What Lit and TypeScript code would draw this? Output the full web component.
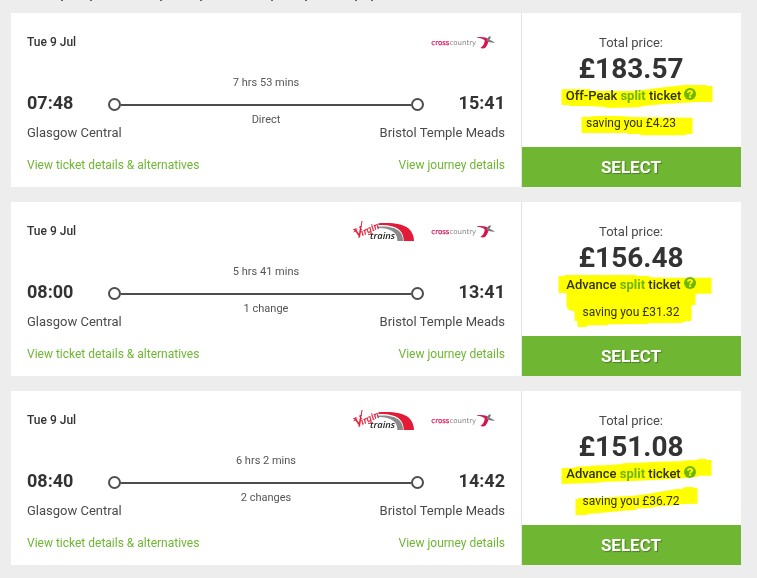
import { LitElement, html, css, svg } from "lit";
import { customElement, property } from "lit/decorators.js";

interface Journey {
  date: string;
  depart: string;
  arrive: string;
  from: string;
  to: string;
  duration: string;
  changes: string;
  virgin: boolean;
  price: string;
  ticket: string;
  saving: string;
  markTop: number;
  marks: string[];
}

const JOURNEYS: Journey[] = [
  {
    date: "Tue 9 Jul", depart: "07:48", arrive: "15:41",
    from: "Glasgow Central", to: "Bristol Temple Meads",
    duration: "7 hrs 53 mins", changes: "Direct", virgin: false,
    price: "£183.57", ticket: "Off-Peak", saving: "saving you £4.23",
    markTop: -21,
    marks: [
      "123,208 210,208 210,212 248,213 340,213 385,208 430,202 492,195 558,195 558,198 576,198 576,246 530,246 480,249 430,252 370,258 354,262 258,264 257,261 200,258 145,258 144,255 123,255",
      "183,290 216,290 216,288 300,288 330,291 372,292 516,293 516,342 498,342 498,346 360,346 360,342 321,342 321,339 183,339",
    ],
  },
  {
    date: "Tue 9 Jul", depart: "08:00", arrive: "13:41",
    from: "Glasgow Central", to: "Bristol Temple Meads",
    duration: "5 hrs 41 mins", changes: "1 change", virgin: true,
    price: "£156.48", ticket: "Advance", saving: "saving you £31.32",
    markTop: -24,
    marks: [
      "114,198 132,198 132,195 348,195 348,198 387,198 387,202 440,203 573,203 573,251 525,251 525,285 513,285 513,333 495,333 495,336 486,336 486,339 381,340 381,342 264,343 264,346 210,346 198,348 198,351 171,351 171,333 162,333 162,303 150,303 150,299 141,299 141,291 138,291 138,249 114,249",
    ],
  },
  {
    date: "Tue 9 Jul", depart: "08:40", arrive: "14:42",
    from: "Glasgow Central", to: "Bristol Temple Meads",
    duration: "6 hrs 2 mins", changes: "2 changes", virgin: true,
    price: "£151.08", ticket: "Advance", saving: "saving you £36.72",
    markTop: -27,
    marks: [
      "123,204 165,203 165,200 210,199 210,197 267,195 306,192 306,190 354,188 414,185 480,184 501,181 531,180 531,177 558,177 558,180 573,180 573,227 534,227 534,230 513,231 501,234 460,236 399,240 340,243 255,245 230,248 186,250 123,252",
      "165,297 174,297 174,294 255,293 290,290 339,287 380,282 414,276 450,270 468,267 486,267 486,263 498,261 519,261 519,264 531,264 531,311 486,312 470,315 396,321 396,323 345,326 345,330 300,333 240,339 200,342 200,345 165,345",
    ],
  },
];

const virginLogo = html`
  <svg class="virgin" viewBox="39 27 186 69" role="img" aria-label="Virgin Trains">
    <path fill="#e31b36" d="M115 37C150 34 188 37 205 52C217 63 222 76 222 90H191C191 70 183 56 163 48C150 43 133 42 115 42Z" />
    <path fill="#8a8a8c" d="M113 47C140 44 165 49 177 60C187 69 189 79 189 90H172C172 77 168 67 156 60C145 53 130 50 113 51Z" />
    <path fill="none" stroke="#e31b36" stroke-width="3" stroke-linecap="round" d="M42 62L51 56M57 80L66 31" />
    <g fill="#e31b36" stroke="#e31b36" font-family="Liberation Serif, serif" font-style="italic" transform="translate(49 82) rotate(-24)">
      <text font-size="42" stroke-width="1">V</text>
      <text x="19" y="0" font-size="30" stroke-width="1">irgin</text>
    </g>
    <text x="90" y="85" fill="#222" font-family="Open Sans, sans-serif" font-size="28" font-weight="600" font-style="italic">trains</text>
  </svg>`;

const crossCountryLogo = html`
  <svg class="cross" viewBox="273 42 192 42" role="img" aria-label="CrossCountry">
    <text x="274" y="71" font-family="DejaVu Sans, sans-serif" font-size="21"><tspan fill="#d6105a" stroke="#d6105a" stroke-width="0.6">cross</tspan><tspan fill="#85858a">country</tspan></text>
    <path fill="#d6174f" d="M411 49C424 46 438 48 448 55C445 64 443 74 436 80C432 83 426 83 421 81C431 75 434 65 434 58C428 53 421 51 411 50Z" />
    <path fill="#77787b" d="M440 56L446 47L452 46L452 51L448 56C454 58 460 61 465 65C456 66 447 63 440 60Z" />
  </svg>`;

@customElement("journey-card")
class JourneyCard extends LitElement {
  @property({ attribute: false }) journey!: Journey;

  static styles = css`
    :host { display: flex; background: #fff; color: #333; font-size: 12px; line-height: 16px; }
    .trip { flex: 1; min-width: 0; padding: 17px 16px 14px 16px; box-sizing: border-box; }
    .head { display: flex; align-items: center; height: 24px; padding-right: 10px; }
    .date { flex: 1; font-weight: 500; }
    .logos { display: flex; align-items: center; gap: 16px; }
    .virgin { width: 62px; height: 23px; display: block; overflow: visible; }
    .cross { width: 64px; height: 14px; display: block; overflow: visible; }
    .route { display: flex; margin-top: 21px; }
    .stop { flex: none; width: 81px; display: flex; flex-direction: column; gap: 9px; padding-top: 16px; white-space: nowrap; align-items: flex-start; }
    .stop.end { align-items: flex-end; }
    .time { font-size: 18px; line-height: 24px; font-weight: 700; }
    .place { font-size: 13px; line-height: 18px; color: #4a4a4a; }
    .track { flex: 1; text-align: center; font-size: 11px; color: #555; }
    .line { display: flex; align-items: center; margin: 7px 0 1px; }
    .dot { width: 13px; height: 13px; box-sizing: border-box; border: 2px solid #4d4d4d; border-radius: 50%; }
    .rail { flex: 1; height: 2px; background: #4d4d4d; }
    .links { display: flex; justify-content: space-between; margin-top: 15px; }
    a { color: #6fb633; text-decoration: none; }
    .fare { width: 30%; box-sizing: content-box; flex: none; border-left: 1px solid #e4e4e4; display: flex; flex-direction: column; text-align: center; position: relative; }
    .info { flex: 1; padding: 21px 1px 0 0; }
    .label { font-size: 13px; line-height: 18px; color: #4a4a4a; }
    .price { font-size: 28px; line-height: 34px; font-weight: 700; }
    .ticket { font-size: 13px; font-weight: 500; display: flex; justify-content: center; gap: 3px; padding-top: 2px; }
    .split { color: #6fb633; font-weight: 700; }
    .help { width: 12px; height: 12px; }
    .saving { margin-top: 11px; }
    .marks { position: absolute; top: 0; left: 50%; width: 219px; height: 134px; transform: translateX(-50%); mix-blend-mode: multiply; pointer-events: none; }
    button { border: 0; margin: 0; padding: 0 1px 0 0; height: 40px; background: #6fb633; color: #fff; font: 700 17px/40px Roboto, sans-serif; text-shadow: 1px 1px 1px rgba(0, 0, 0, 0.3); cursor: pointer; }
  `;

  render() {
    const j = this.journey;
    return html`
      <section class="trip">
        <div class="head">
          <span class="date">${j.date}</span>
          <div class="logos">${j.virgin ? virginLogo : null}${crossCountryLogo}</div>
        </div>
        <div class="route">
          <div class="stop"><span class="time">${j.depart}</span><span class="place">${j.from}</span></div>
          <div class="track">
            <div>${j.duration}</div>
            <div class="line"><span class="dot"></span><span class="rail"></span><span class="dot"></span></div>
            <div>${j.changes}</div>
          </div>
          <div class="stop end"><span class="time">${j.arrive}</span><span class="place">${j.to}</span></div>
        </div>
        <div class="links">
          <a href="#tickets">View ticket details &amp; alternatives</a>
          <a href="#journey">View journey details</a>
        </div>
      </section>
      <section class="fare">
        <div class="info">
          <div class="label">Total price:</div>
          <div class="price">${j.price}</div>
          <div class="ticket">
            <span>${j.ticket} <span class="split">split</span> ticket</span>
            <svg class="help" viewBox="0 0 12 12" role="img" aria-label="Help">
              <circle cx="6" cy="6" r="6" fill="#6fb633" />
              <path d="M4 4.7C4 2.3 8.1 2.3 8.1 4.5C8.1 5.8 6.1 5.8 6.1 7.4" fill="none" stroke="#fff" stroke-width="1.8" />
              <rect x="5.2" y="8.2" width="1.8" height="1.7" fill="#fff" />
            </svg>
          </div>
          <div class="saving">${j.saving}</div>
        </div>
        <button type="button">SELECT</button>
        <svg class="marks" viewBox="6 ${j.markTop} 657 402" aria-hidden="true">
          ${j.marks.map((points) => svg`<polygon fill="#ffff00" points=${points} />`)}
        </svg>
      </section>`;
  }
}

@customElement("app-root")
class AppRoot extends LitElement {
  static styles = css`
    :host { display: block; min-height: 100vh; background: #ededed; font-family: Roboto, sans-serif; }
    .edge { display: block; width: 400px; height: 1px; }
    .list { display: flex; flex-direction: column; gap: 15px; padding: 12px 16px 13px 11px; }
  `;

  render() {
    return html`
      <svg class="edge" viewBox="0 0 400 1" aria-hidden="true">
        ${[61, 90, 160, 200, 271, 305, 355, 371].map((x) => svg`<rect x=${x} y="0" width="2" height="1" fill="#666" />`)}
      </svg>
      <main class="list">
        ${JOURNEYS.map((j) => html`<journey-card .journey=${j}></journey-card>`)}
      </main>`;
  }
}
